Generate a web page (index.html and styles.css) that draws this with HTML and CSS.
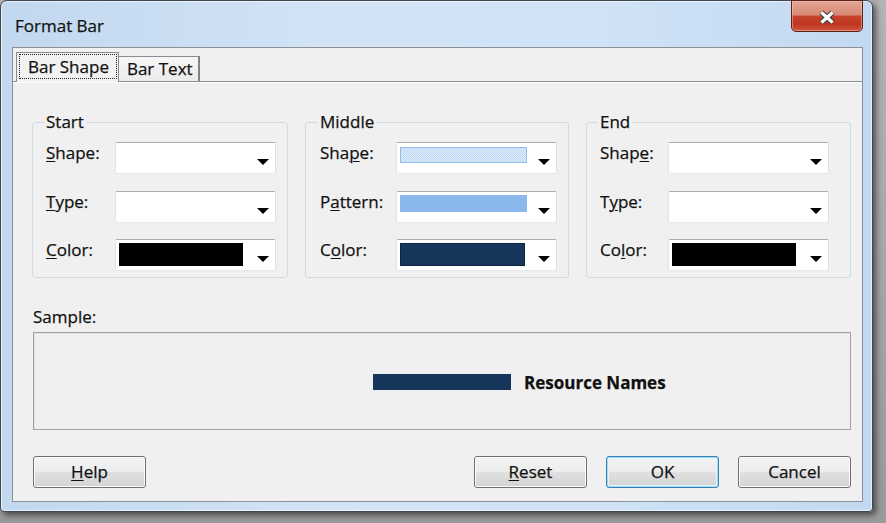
FILE: index.html
```html
<!DOCTYPE html>
<html>
<head>
<meta charset="utf-8">
<title>Format Bar</title>
<link rel="stylesheet" href="styles.css">
</head>
<body>
<div class="window">
  <div class="titlebar">
    <span class="title">Format Bar</span>
    <div class="close">
      <svg width="18" height="15" viewBox="0 0 18 15">
        <path d="M3.5 2.5 L14.5 12.5 M14.5 2.5 L3.5 12.5" stroke="#3b3b3b" stroke-width="5.4" fill="none"/>
        <path d="M3.5 2.5 L14.5 12.5 M14.5 2.5 L3.5 12.5" stroke="#ffffff" stroke-width="3.2" fill="none"/>
      </svg>
    </div>
  </div>
  <div class="client">
    <div class="tabs">
      <div class="tab active"><span class="focus">Bar Shape</span></div>
      <div class="tab">Bar Text</div>
    </div>
    <div class="panel">
      <div class="groups">
        <fieldset class="group g-start">
          <legend>Start</legend>
          <div class="rows">
            <div class="row"><span class="lbl"><u>S</u>hape:</span><div class="combo"><span class="arrow"></span></div></div>
            <div class="row"><span class="lbl"><u>T</u>ype:</span><div class="combo"><span class="arrow"></span></div></div>
            <div class="row"><span class="lbl"><u>C</u>olor:</span><div class="combo"><span class="sw sw-black"></span><span class="arrow"></span></div></div>
          </div>
        </fieldset>
        <fieldset class="group g-middle">
          <legend>Middle</legend>
          <div class="rows">
            <div class="row"><span class="lbl">Sha<u>p</u>e:</span><div class="combo"><span class="sw sw-light"></span><span class="arrow"></span></div></div>
            <div class="row"><span class="lbl">P<u>a</u>ttern:</span><div class="combo"><span class="sw sw-pattern"></span><span class="arrow"></span></div></div>
            <div class="row"><span class="lbl">C<u>o</u>lor:</span><div class="combo"><span class="sw sw-navy"></span><span class="arrow"></span></div></div>
          </div>
        </fieldset>
        <fieldset class="group g-end">
          <legend>End</legend>
          <div class="rows">
            <div class="row"><span class="lbl">Shap<u>e</u>:</span><div class="combo"><span class="arrow"></span></div></div>
            <div class="row"><span class="lbl">T<u>y</u>pe:</span><div class="combo"><span class="arrow"></span></div></div>
            <div class="row"><span class="lbl">Co<u>l</u>or:</span><div class="combo"><span class="sw sw-black"></span><span class="arrow"></span></div></div>
          </div>
        </fieldset>
      </div>
      <div class="sample-label">Sample:</div>
      <div class="sample">
        <span></span>
        <div class="bar"></div>
        <div class="sample-text">Resource Names</div>
      </div>
      <div class="buttons">
        <button class="btn help"><u>H</u>elp</button>
        <button class="btn"><u>R</u>eset</button>
        <button class="btn default">OK</button>
        <button class="btn">Cancel</button>
      </div>
    </div>
  </div>
</div>
</body>
</html>
```

FILE: styles.css
```css
* { box-sizing: border-box; }
html, body { margin: 0; height: 100%; }
body {
  background: linear-gradient(180deg, #b4b4b4 0%, #9a9a9a 100%);
  font-family: "Open Sans", "Noto Sans", sans-serif;
  font-size: 17px;
  color: #111;
  -webkit-text-stroke: 0.25px #111;
  overflow: hidden;
}
u { text-decoration-thickness: 1px; text-underline-offset: 2px; }

.window {
  width: 873px;
  height: 512px;
  display: flex;
  flex-direction: column;
  border: 1px solid #3e4750;
  border-radius: 7px 7px 4px 4px;
  background: linear-gradient(90deg, #c2d8ef 0%, #d3e4f6 40%, #cfe2f6 70%, #c3d9f1 100%);
  box-shadow: inset 0 0 0 1px rgba(255,255,255,0.6), 3px 3px 6px rgba(0,0,0,0.55);
}

.titlebar {
  height: 46px;
  flex: none;
  display: flex;
  justify-content: space-between;
  align-items: flex-start;
  padding: 0 9px 0 14px;
}
.title { margin-top: 14px; line-height: 22px; }
.close {
  width: 72px;
  height: 32px;
  margin-top: -1px;
  border: 1px solid #5a2117;
  border-radius: 0 0 5px 5px;
  background: linear-gradient(180deg, #e3a595 0%, #d88a76 45%, #c4412b 52%, #bf3620 78%, #d0553a 100%);
  box-shadow: inset 0 0 0 1px rgba(255,205,195,0.45);
  display: flex;
  align-items: center;
  justify-content: center;
  padding-top: 3px;
}

.client {
  flex: 1;
  margin: 0 9px 9px 11px;
  border: 1px solid #8b9097;
  background: #f0f0f0;
  display: flex;
  flex-direction: column;
  padding-top: 4px;
}

.tabs {
  display: flex;
  align-items: flex-end;
  height: 29px;
  padding-left: 3px;
  position: relative;
  z-index: 1;
}
.tab {
  height: 25px;
  line-height: 23px;
  padding: 0 5px 0 8px;
  border-top: 1px solid #898c95;
  border-right: 2px solid #7f8288;
  background: linear-gradient(180deg, #f6f6f6, #ebebeb);
}
.tab.active {
  height: 30px;
  margin-bottom: -1px;
  padding: 1px 1px 0 2px;
  border: 1px solid #898c95;
  border-bottom: none;
  background: #f2f2f2;
}
.focus {
  display: block;
  line-height: 23px;
  padding: 0 7px 0 8px;
  border: 1px dotted #222;
}

.panel {
  flex: 1;
  border-top: 1px solid #898c95;
  box-shadow: inset 0 1px 0 #ffffff;
  padding: 30px 11px 0 19px;
  display: flex;
  flex-direction: column;
}

.groups { display: flex; gap: 17px; }
.group {
  margin: 0;
  padding: 10px 0 6px 13px;
  border: 1px solid #d0dae2;
  border-radius: 3px;
  min-width: 0;
}
.group legend { padding: 0 2px; margin-left: -2px; line-height: 20px; }
.g-start { width: 256px; }
.g-middle { width: 264px; padding-left: 14px; }
.g-end { width: 265px; }

.rows { display: flex; flex-direction: column; gap: 16.5px; }
.row { display: flex; align-items: flex-start; }
.lbl { line-height: 22px; flex: none; }
.g-start .lbl { width: 69px; }
.g-middle .lbl { width: 76px; }
.g-end .lbl { width: 68px; }

.combo {
  width: 161px;
  height: 32px;
  display: flex;
  align-items: flex-start;
  padding: 3px 0 0 3px;
  background: #fff;
  border: 1px solid;
  border-color: #abadb3 #dbdfe6 #e3e9ef #e2e3ea;
  border-radius: 2px;
}
.arrow {
  margin: 13px 6px 0 auto;
  width: 0;
  height: 0;
  border-left: 6px solid transparent;
  border-right: 6px solid transparent;
  border-top: 6px solid #000;
}
.sw { display: block; width: 124px; height: 23px; }
.sw-black { background: #000; }
.sw-navy { width: 125px; background: #16365c; border: 1px solid #0d2440; }
.sw-light {
  width: 127px;
  height: 16px;
  margin-top: 1px;
  border: 1px solid #92bcec;
  background: conic-gradient(#b9d5f4 25%, #e4effb 0 50%, #b9d5f4 0 75%, #e4effb 0);
  background-size: 2px 2px;
}
.sw-pattern { width: 127px; height: 17px; background: #8bb8ec; }

.sample-label { margin-top: 28px; line-height: 22px; padding-left: 1px; }
.sample {
  margin: 4px 0 0 1px;
  height: 98px;
  border: 1px solid #a2a2a2;
  box-shadow: inset 1px 1px 0 #e2e2e2;
  display: grid;
  grid-template-columns: 1fr auto 1fr;
  align-items: center;
}
.bar { width: 138px; height: 16px; margin-top: 1px; background: #16365c; }
.sample-text { font-weight: 700; margin-left: 13px; line-height: 22px; padding-top: 4px; }

.buttons { display: flex; gap: 19px; margin: 26px 0 0 1px; }
.btn {
  width: 113px;
  height: 32px;
  padding: 0;
  font: inherit;
  line-height: 30px;
  color: #111;
  border: 1px solid #707070;
  border-radius: 3px;
  background: linear-gradient(180deg, #f4f4f4 0%, #ececec 50%, #e0e0e0 51%, #d4d4d4 100%);
  box-shadow: inset 0 0 0 1px #fbfbfb;
}
.btn.help { margin-right: auto; }
.btn.default {
  border-color: #3c7fb1;
  box-shadow: inset 0 0 0 1px #9fdcf6, inset 0 0 0 2px #e4f4fc;
}
```
